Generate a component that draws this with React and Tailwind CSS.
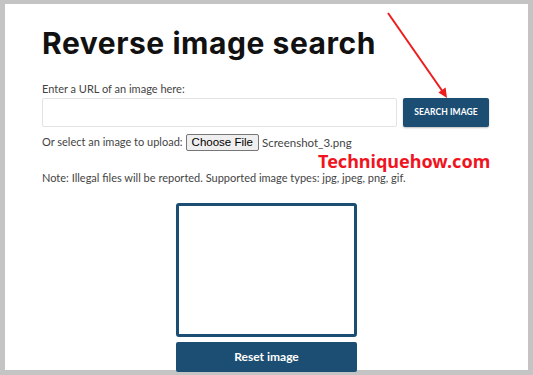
import React from 'react';

const BLUE = 'bg-[#1c4e73]';

function Arrow() {
  return (
    <svg className="absolute left-0 top-0 pointer-events-none" width="523" height="366" viewBox="0 0 523 366">
      <line x1="383" y1="9" x2="438" y2="88" stroke="#ee1c1c" strokeWidth="2" />
      <polygon points="442,94 433.4,88.6 440.6,83.6" fill="#ee1c1c" />
    </svg>
  );
}

export default function App() {
  return (
    <div className="w-[533px] h-[375px] overflow-hidden bg-[#c4c4c4] pt-[4px] px-[5px] font-['Lato',sans-serif]">
      <div className="relative h-[366px] bg-white">
        <div className="pl-[37px]">
          <h1 className="pt-[21px] h-[57px] text-[30px] leading-[36px] font-bold text-[#111] font-['Inter',sans-serif] tracking-[0.55px]">
            Reverse image search
          </h1>
          <p className="mt-[20px] text-[11px] leading-[16px] text-[#444]">Enter a URL of an image here:</p>
          <div className="mt-[1px] flex items-start gap-[6px]">
            <div className="w-[355px] h-[29px] border border-[#e3e3e3] rounded-[2px] bg-white" />
            <button className={`w-[86px] h-[29px] ${BLUE} rounded-[2px] text-white text-[8.5px] font-bold tracking-[0.1px] shadow-[0_1px_2px_rgba(0,0,0,0.25)]`}>
              SEARCH IMAGE
            </button>
          </div>
          <div className="mt-[7px] h-[17px] flex items-center text-[11px] text-[#444]">
            <span>Or select an image to upload:</span>
            <span className="ml-[3px] h-[17px] px-[5px] flex items-center border border-[#767676] rounded-[2px] bg-[#efefef] text-[11.5px] text-black font-['Liberation_Sans',sans-serif]">
              Choose File
            </span>
            <span className="ml-[3px] text-[11.5px]">Screenshot_3.png</span>
          </div>
          <p className="mt-[19px] text-[11px] leading-[16px] text-[#444]">
            Note: Illegal files will be reported. Supported image types: jpg, jpeg, png, gif.
          </p>
        </div>
        <div className="mt-[17px] flex flex-col items-center">
          <div className="w-[181px] h-[134px] border-[3px] border-[#1c4e73] rounded-[3px] bg-white" />
          <button className={`mt-[5px] w-[181px] h-[30px] ${BLUE} rounded-[2px] text-white text-[12px] font-bold`}>
            Reset image
          </button>
        </div>
        <div className="absolute left-[313px] top-[148px] text-[18px] leading-[19px] font-bold text-[#f0141e] font-['Noto_Sans',sans-serif]">
          Techniquehow.com
        </div>
        <Arrow />
      </div>
    </div>
  );
}
